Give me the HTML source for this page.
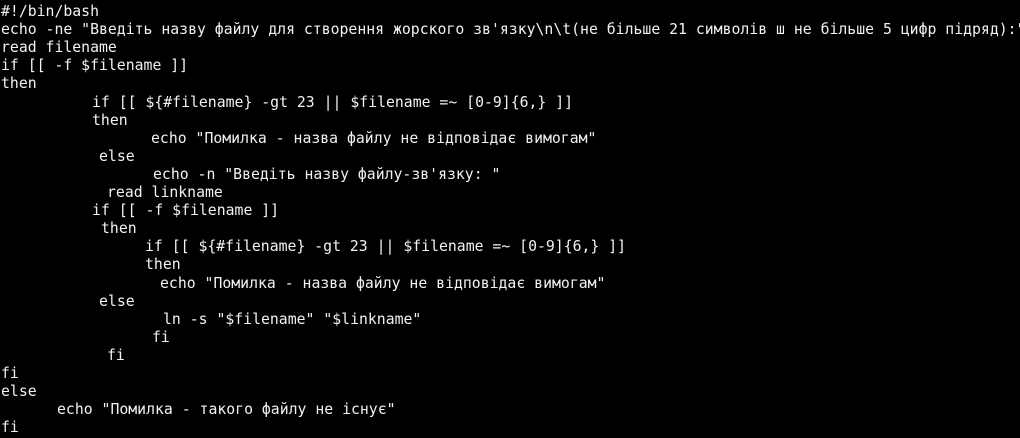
<!DOCTYPE html>
<html><head><meta charset="utf-8"><style>
html,body{margin:0;padding:0;background:#000;width:1020px;height:438px;overflow:hidden}
div{position:absolute;white-space:pre;color:#f2f2f2;font-family:"DejaVu Sans Mono","Liberation Mono",monospace;font-size:14.8px;line-height:18px;height:18px;letter-spacing:0}
</style></head><body>
<div style="left:1px;top:3px">#!/bin/bash</div>
<div style="left:1px;top:21.1px">echo -ne "Введіть назву файлу для створення жорского зв'язку\n\t(не більше 21 символів ш не більше 5 цифр підряд):"</div>
<div style="left:1px;top:39.2px">read filename</div>
<div style="left:1px;top:57.3px">if [[ -f $filename ]]</div>
<div style="left:1px;top:75.4px">then</div>
<div style="left:92px;top:93.5px">if [[ ${#filename} -gt 23 || $filename =~ [0-9]{6,} ]]</div>
<div style="left:92px;top:111.6px">then</div>
<div style="left:151px;top:129.7px">echo "Помилка - назва файлу не відповідає вимогам"</div>
<div style="left:99px;top:147.8px">else</div>
<div style="left:153px;top:165.9px">echo -n "Введіть назву файлу-зв'язку: "</div>
<div style="left:107px;top:184px">read linkname</div>
<div style="left:92px;top:202.1px">if [[ -f $filename ]]</div>
<div style="left:101px;top:220.2px">then</div>
<div style="left:145px;top:238.3px">if [[ ${#filename} -gt 23 || $filename =~ [0-9]{6,} ]]</div>
<div style="left:145px;top:256.4px">then</div>
<div style="left:160px;top:274.5px">echo "Помилка - назва файлу не відповідає вимогам"</div>
<div style="left:99px;top:292.6px">else</div>
<div style="left:163px;top:310.7px">ln -s "$filename" "$linkname"</div>
<div style="left:152px;top:328.8px">fi</div>
<div style="left:107px;top:346.9px">fi</div>
<div style="left:1px;top:365px">fi</div>
<div style="left:1px;top:383.1px">else</div>
<div style="left:57px;top:401.2px">echo "Помилка - такого файлу не існує"</div>
<div style="left:1px;top:419.3px">fi</div>
</body></html>
